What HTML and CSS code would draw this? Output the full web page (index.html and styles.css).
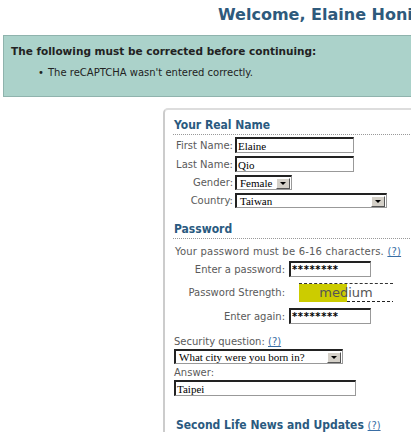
FILE: index.html
```html
<!DOCTYPE html>
<html lang="en">
<head>
    <meta charset="UTF-8">
    <title>Welcome, Elaine Honi!</title>
    <link rel="stylesheet" href="styles.css">
</head>
<body>
    <div class="page">
        <h1 class="welcome">Welcome, Elaine Honi!</h1>

        <!-- error message -->
        <div class="errors">
            <p class="errors-title">The following must be corrected before continuing:</p>
            <ul>
                <li>The reCAPTCHA wasn't entered correctly.</li>
            </ul>
        </div>

        <div class="form-box">
            <!-- real name -->
            <h2 class="section-title">Your Real Name</h2>
            <div class="fields name-fields">
                <label>First Name:</label>
                <span class="input w-name">Elaine</span>
                <label>Last Name:</label>
                <span class="input w-name">Qio</span>
                <label>Gender:</label>
                <span class="select w-gender"><span class="select-text">Female</span><span class="select-btn"></span></span>
                <label>Country:</label>
                <span class="select w-country"><span class="select-text">Taiwan</span><span class="select-btn"></span></span>
            </div>

            <!-- password -->
            <h2 class="section-title pw-title">Password</h2>
            <p class="note">Your password must be 6-16 characters. <a href="#">(?)</a></p>
            <div class="fields pw-fields">
                <label>Enter a password:</label>
                <span class="input w-pw">********</span>
                <label>Password Strength:</label>
                <div class="strength"><div class="strength-bar">medium</div></div>
                <label>Enter again:</label>
                <span class="input w-pw">********</span>
            </div>

            <div class="stacked">
                <label>Security question: <a href="#">(?)</a></label>
                <span class="select w-question"><span class="select-text">What city were you born in?</span><span class="select-btn"></span></span>
                <label class="answer-label">Answer:</label>
                <span class="input w-answer">Taipei</span>
            </div>

            <h2 class="section-title news-title">Second Life News and Updates <a href="#">(?)</a></h2>
        </div>
    </div>
</body>
</html>
```

FILE: styles.css
```css
/* page */
html, body {
    margin: 0;
    padding: 0;
    background: #fff;
    overflow: hidden;
}

body {
    font-family: 'DejaVu Sans', Verdana, sans-serif;
    font-size: 10px;
    color: #5a5a5a;
}

.page {
    width: 440px;
}

a {
    color: #3a6ea5;
}

.welcome {
    margin: 0;
    padding: 5px 0 0 218px;
    font-size: 16px;
    line-height: 20px;
    color: #2e5a7c;
    white-space: nowrap;
}

/* error box */
.errors {
    margin: 10px 0 0 3px;
    height: 60px;
    border: 1px solid #8fb3ad;
    background: #abd2ca;
    color: #222;
    font-size: 10px;
}

.errors-title {
    margin: 9px 0 0 7px;
    font-weight: bold;
    font-size: 10.5px;
}

.errors ul {
    margin: 10px 0 0 0;
    padding-left: 34px;
    list-style: none;
}

.errors li::before {
    content: '\2022';
    display: inline-block;
    width: 10px;
}

/* form box */
.form-box {
    margin: 11px 0 0 163px;
    padding: 8px 0 0 8px;
    border-top: 2px solid #ddd;
    border-left: 2px solid #ccc;
    border-top-left-radius: 5px;
    height: 330px;
}

.section-title {
    margin: 0;
    padding: 0 0 1px 1px;
    font-family: 'DejaVu Sans Condensed', 'DejaVu Sans', sans-serif;
    font-size: 12px;
    line-height: 15px;
    color: #2a5a80;
    border-bottom: 1px dotted #999;
}

.fields {
    display: grid;
    align-items: center;
    row-gap: 3px;
    column-gap: 2px;
}

.fields label {
    text-align: right;
    white-space: nowrap;
}

.name-fields {
    grid-template-columns: 60px auto;
    margin-top: 2px;
}

.pw-title {
    margin-top: 14px;
}

.note {
    margin: 7px 0 0 2px;
    letter-spacing: 0.2px;
}

.pw-fields {
    grid-template-columns: 112px auto;
    column-gap: 4px;
    row-gap: 6px;
    margin-top: 4px;
}

/* inputs */
.input,
.select {
    display: flex;
    align-items: center;
    box-sizing: border-box;
    height: 16px;
    background: #fff;
    border-top: 2px solid #222;
    border-left: 2px solid #222;
    border-right: 1px solid #999;
    border-bottom: 1px solid #999;
    font-family: 'Liberation Serif', serif;
    font-size: 11px;
    color: #000;
    padding-left: 1px;
    white-space: nowrap;
    overflow: hidden;
}

.select {
    height: 15px;
    justify-content: space-between;
    padding-left: 3px;
}

.select-btn {
    width: 14px;
    height: 11px;
    box-sizing: border-box;
    background: #d4d0c8;
    border: 1px solid;
    border-color: #fff #555 #555 #fff;
    display: flex;
    align-items: center;
    justify-content: center;
    margin-right: 1px;
}

.select-btn::after {
    content: '';
    border-left: 3px solid transparent;
    border-right: 3px solid transparent;
    border-top: 3px solid #000;
    margin-top: 1px;
}

.w-name { width: 119px; }
.w-gender { width: 57px; }
.w-country { width: 152px; }
.w-pw {
    width: 82px;
    font-family: 'DejaVu Sans', sans-serif;
    font-size: 10px;
    font-weight: bold;
    letter-spacing: 0.6px;
}
.w-question { width: 169px; }
.w-answer { width: 182px; }

/* strength meter */
.strength {
    width: 94px;
    margin-left: 10px;
    border-top: 1px dashed #333;
}

.strength-bar {
    height: 18px;
    line-height: 18px;
    text-align: center;
    font-size: 13px;
    color: #555;
    background:
        repeating-linear-gradient(to right, #222 0 3px, transparent 3px 5px) 48px 100% / 46px 1px no-repeat,
        linear-gradient(to right, #cccc00 48px, transparent 48px);
}

/* security question */
.stacked {
    display: flex;
    flex-direction: column;
    align-items: flex-start;
    margin: 12px 0 0 1px;
}

.stacked label {
    margin-bottom: 2px;
}

.answer-label {
    margin-top: 3px;
}

.news-title {
    margin-top: 22px;
    padding-left: 3px;
}

.news-title a {
    font-weight: normal;
    font-size: 11px;
}
```
